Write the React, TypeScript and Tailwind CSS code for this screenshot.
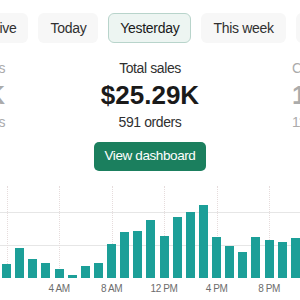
import { useLayoutEffect, useRef } from "react";

const RANGES = ["Live", "Today", "Yesterday", "This week", "This month", "Last 30 days"];

// hourly sales for yesterday, in dollars
const HOURLY = [
  420, 925, 575, 450, 275, 90, 370, 470, 1045, 1405, 1445, 1765, 1285, 1855, 2030, 2245, 1250, 975, 800, 1250,
  1170, 1115, 1210, 870,
];
const MAX = 3000;

const hourLabel = (h: number) => (h === 0 ? "12 AM" : h < 12 ? `${h} AM` : h === 12 ? "12 PM" : `${h - 12} PM`);

function RangeTabs({ selected }: { selected: string }) {
  const rowRef = useRef<HTMLDivElement>(null);
  const activeRef = useRef<HTMLButtonElement>(null);

  // keep the active range in the middle of the strip
  useLayoutEffect(() => {
    const row = rowRef.current;
    const tab = activeRef.current;
    if (!row || !tab) return;
    row.scrollLeft = tab.offsetLeft + tab.offsetWidth / 2 - row.clientWidth / 2;
  }, [selected]);

  return (
    <div ref={rowRef} className="relative flex gap-[10px] overflow-x-auto px-4 [scrollbar-width:none]">
      {RANGES.map((r) => {
        const on = r === selected;
        return (
          <button
            key={r}
            ref={on ? activeRef : undefined}
            className={
              on
                ? "h-[30px] shrink-0 whitespace-nowrap rounded-[6px] border border-[#b8d4cb] bg-[#edf5f2] px-[11px] text-[14px] tracking-[-0.3px] text-[#1a1a1a]"
                : "h-[30px] shrink-0 whitespace-nowrap rounded-[6px] border border-transparent bg-[#f7f7f7] px-[11px] text-[14px] tracking-[-0.3px] text-[#303030]"
            }
          >
            {r}
          </button>
        );
      })}
    </div>
  );
}

function MetricCarousel() {
  return (
    <div className="flex justify-center overflow-hidden">
      {/* previous metric, peeking in */}
      <div className="flex w-[100px] shrink-0 flex-col items-end pr-[3px] text-[#ababab]">
        <p className="whitespace-nowrap text-[14px] leading-[17px] tracking-[-0.4px]">Sessions</p>
        <p className="mt-[3px] whitespace-nowrap text-[26px] font-bold leading-[30px]">1.4K</p>
        <p className="mt-[4px] whitespace-nowrap text-[14px] leading-[17px] tracking-[-0.4px]">892 visitors</p>
      </div>

      <div className="flex w-[284px] shrink-0 flex-col items-center">
        <p className="text-[14px] leading-[17px] tracking-[-0.4px] text-[#303030]">Total sales</p>
        <p className="mt-[3px] text-[26px] font-bold leading-[30px] text-[#1a1a1a]">$25.29K</p>
        <p className="mt-[4px] text-[14px] leading-[17px] tracking-[-0.4px] text-[#303030]">591 orders</p>
        <button className="mt-[11px] h-[29px] rounded-[5px] bg-[#1b7f5e] px-[11px] text-[13.5px] tracking-[-0.4px] text-white">
          View dashboard
        </button>
      </div>

      {/* next metric, peeking in */}
      <div className="flex w-[100px] shrink-0 flex-col items-start text-[#ababab]">
        <p className="whitespace-nowrap text-[14px] leading-[17px] tracking-[-0.4px]">Conversion</p>
        <p className="mt-[3px] whitespace-nowrap text-[26px] font-bold leading-[30px]">1.9%</p>
        <p className="mt-[4px] whitespace-nowrap text-[14px] leading-[17px] tracking-[-0.4px]">11 checkouts</p>
      </div>
    </div>
  );
}

function HourlyChart() {
  return (
    <div className="overflow-hidden">
      <div className="w-[315px]">
        <div className="relative h-[98px]">
          {/* $1K / $2K guide lines */}
          <div className="absolute inset-x-0 top-[32px] border-t border-[#e6e6e6]" />
          <div className="absolute inset-x-0 top-[65px] border-t border-[#e6e6e6]" />

          <div className="relative grid h-full grid-cols-24">
            {HOURLY.map((v, h) => (
              <div key={h} className="relative flex h-full items-end justify-center">
                {h % 4 === 0 && (
                  <div className="absolute bottom-0 top-[6px] left-1/2 border-l border-dotted border-[#e6dcdc]" />
                )}
                <div className="relative w-[9px] bg-[#1c9f98]" style={{ height: `${(v / MAX) * 100}%` }} />
              </div>
            ))}
          </div>
        </div>

        <div className="mt-[5px] grid grid-cols-24">
          {HOURLY.map((_, h) => (
            <div key={h} className="flex justify-center whitespace-nowrap text-[10px] leading-[12px] tracking-[-0.4px] text-[#6d6d6d]">
              {h % 4 === 0 && h > 0 ? hourLabel(h) : ""}
            </div>
          ))}
        </div>
      </div>
    </div>
  );
}

export default function App() {
  return (
    <div className="h-[300px] w-[300px] overflow-hidden bg-white pt-[13px] font-['Liberation_Sans',Arial,sans-serif]">
      <RangeTabs selected="Yesterday" />

      <div className="mt-[17px]">
        <MetricCarousel />
      </div>

      <div className="mt-[9px]">
        <HourlyChart />
      </div>
    </div>
  );
}
